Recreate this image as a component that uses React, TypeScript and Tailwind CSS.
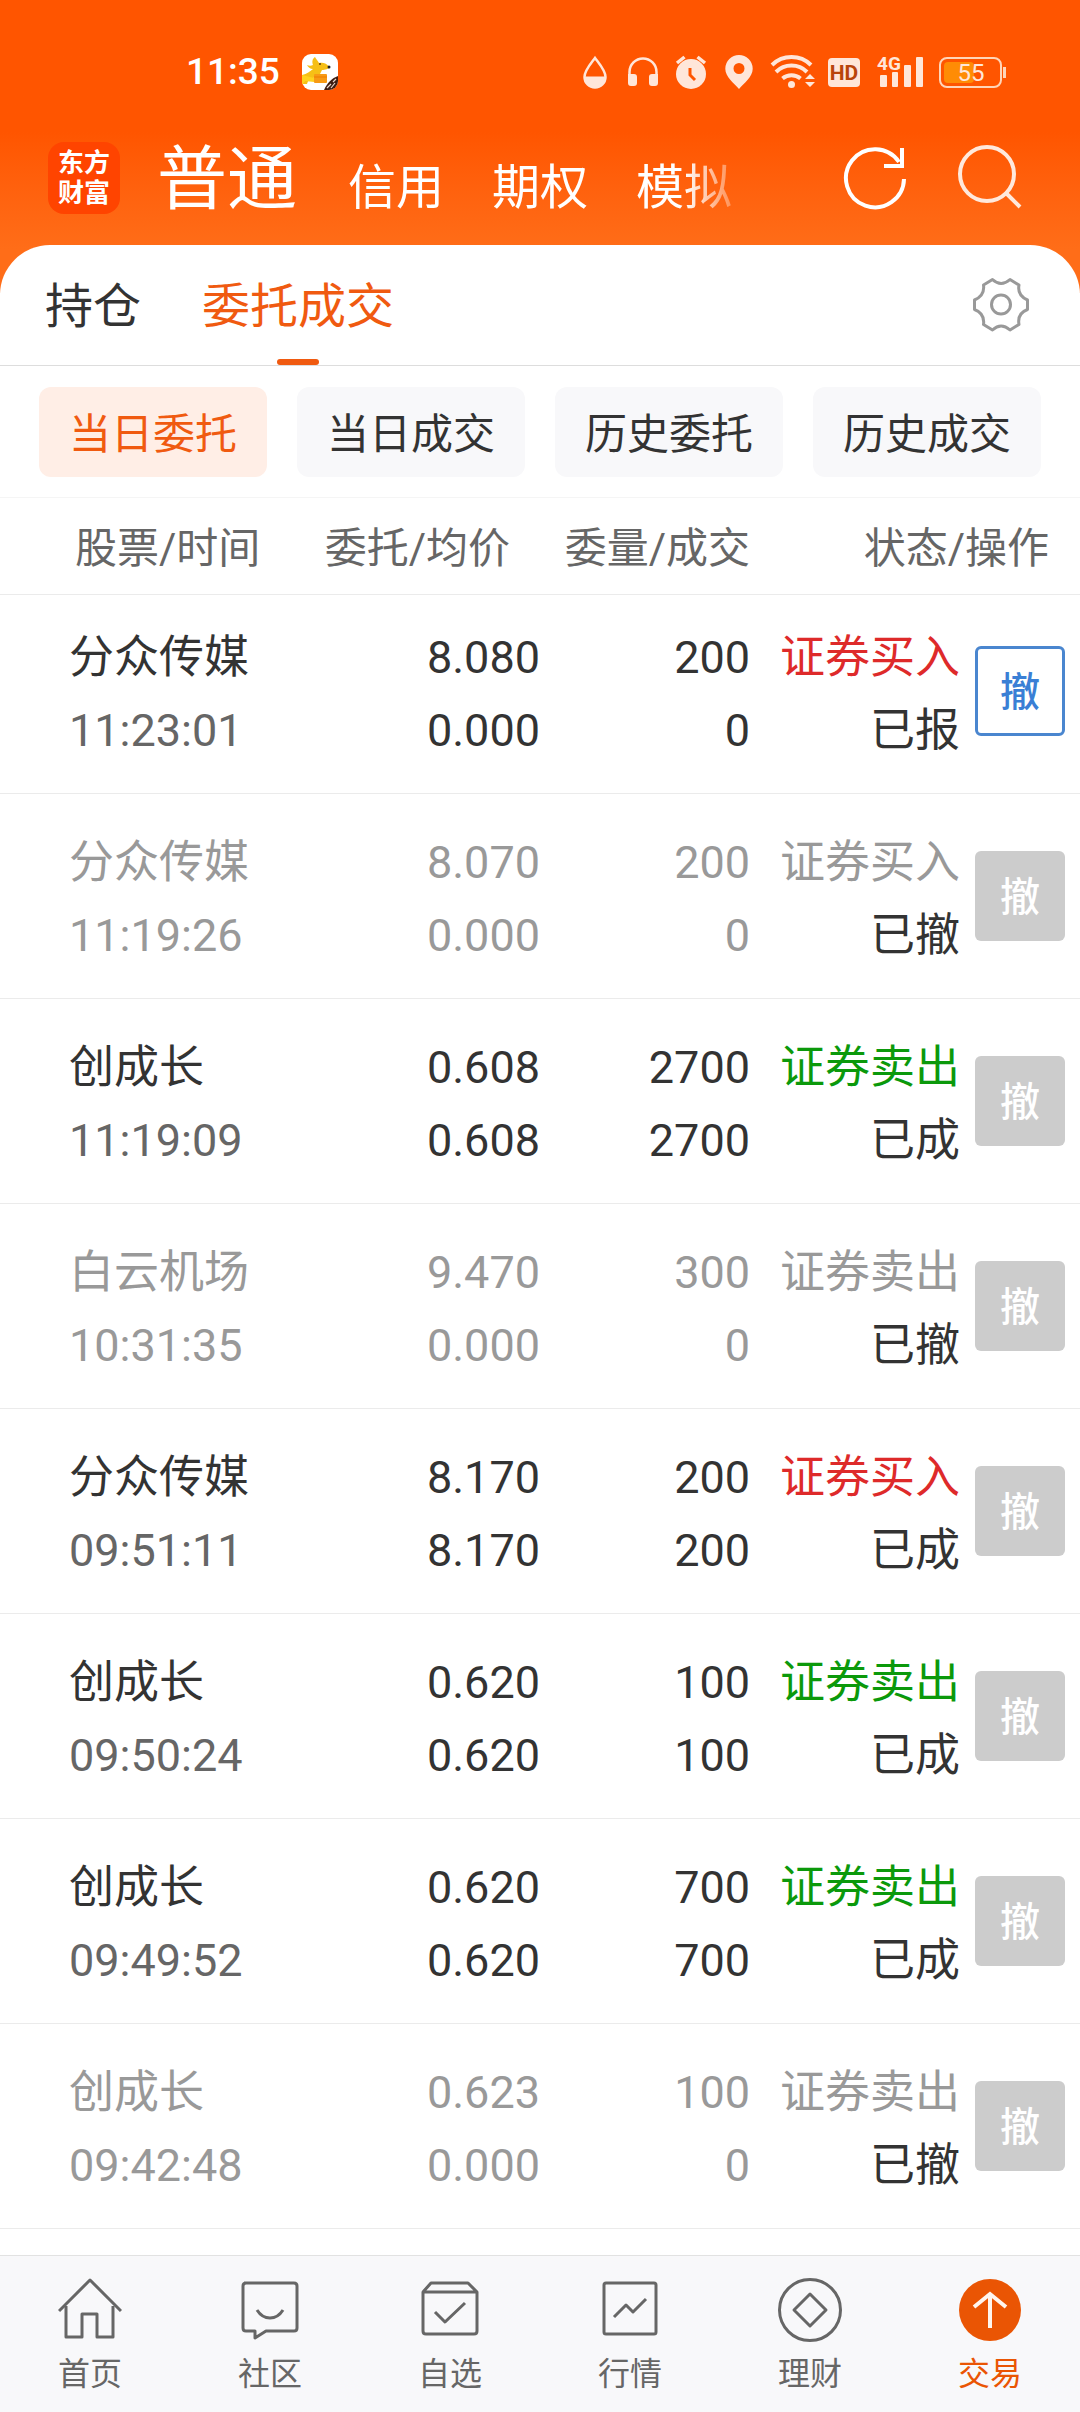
import { useState } from "react";
import type { ReactNode } from "react";

type Order = {
  name: string;
  time: string;
  price: string;
  avg: string;
  qty: string;
  done: string;
  side: "buy" | "sell";
  status: string;
};

const ORDERS: Order[] = [
  { name: "分众传媒", time: "11:23:01", price: "8.080", avg: "0.000", qty: "200", done: "0", side: "buy", status: "已报" },
  { name: "分众传媒", time: "11:19:26", price: "8.070", avg: "0.000", qty: "200", done: "0", side: "buy", status: "已撤" },
  { name: "创成长", time: "11:19:09", price: "0.608", avg: "0.608", qty: "2700", done: "2700", side: "sell", status: "已成" },
  { name: "白云机场", time: "10:31:35", price: "9.470", avg: "0.000", qty: "300", done: "0", side: "sell", status: "已撤" },
  { name: "分众传媒", time: "09:51:11", price: "8.170", avg: "8.170", qty: "200", done: "200", side: "buy", status: "已成" },
  { name: "创成长", time: "09:50:24", price: "0.620", avg: "0.620", qty: "100", done: "100", side: "sell", status: "已成" },
  { name: "创成长", time: "09:49:52", price: "0.620", avg: "0.620", qty: "700", done: "700", side: "sell", status: "已成" },
  { name: "创成长", time: "09:42:48", price: "0.623", avg: "0.000", qty: "100", done: "0", side: "sell", status: "已撤" },
];

const FILTERS = ["当日委托", "当日成交", "历史委托", "历史成交"];

function StatusBar() {
  return (
    <div className="flex h-9 items-center pl-[186px] pr-[73px] text-[#ffe6d9]">
      <span className="text-[37px] leading-10 font-medium text-white">11:35</span>
      <svg className="ml-[22px] size-9" viewBox="0 0 36 36">
        <clipPath id="app">
          <rect width="36" height="36" rx="9" />
        </clipPath>
        <g clipPath="url(#app)">
          <rect width="36" height="36" fill="#fff" />
          <path d="M0 21c5-1 8-4 11-6-3 0-5-2-6-4 2 1 4 1 6 0-1-3-1-6 2-8 1 2 3 4 4 6 4-1 7 0 11 4-1 2-5 3-8 3l-2 4h6v3h-9l-4 1c-3 1-5 2-6 6H0z" fill="#f6bf16" />
          <path d="M0 21l12 3v4L3 27l-3 4z" fill="#ffd21f" />
          <rect x="12" y="20" width="13" height="9" rx="1" fill="#f79a15" />
          <path d="M12 23h13" stroke="#ef7d00" strokeWidth="1" />
          <circle cx="18" cy="10" r="1" fill="#5b3a10" />
          <circle cx="27" cy="13" r="1.5" fill="#222" />
          <path d="M22 36c3-7 8-12 14-14v14z" fill="#3d1d12" />
          <path d="M25 34l4-4m0 4l4-5m-2-1l3-3" stroke="#e8d6cc" strokeWidth="1.2" />
        </g>
      </svg>
      <div className="ml-auto flex gap-3">
        {/* eye comfort */}
        <svg width="31" height="36" viewBox="0 0 31 36">
          <path d="M13 4C9 9.500 2.500 16.500 2.500 23a10.500 10.500 0 0 0 21 0C23.500 16.500 17 9.500 13 4z" fill="none" stroke="currentColor" strokeWidth="2.500" />
          <path d="M2.500 22.500h21a10.500 11.500 0 0 1-21 0z" fill="currentColor" />
        </svg>
        <svg width="36" height="36" viewBox="0 0 36 36">
          <path d="M4.500 26v-8a13.500 13.500 0 0 1 27 0v8" fill="none" stroke="currentColor" strokeWidth="2.500" />
          <path d="M3 20h6q3 0 3 3v6q0 3-3 3H6q-3 0-3-3zM33 20h-6q-3 0-3 3v6q0 3 3 3h3q3 0 3-3z" fill="currentColor" />
        </svg>
        <svg width="37" height="36" viewBox="0 0 37 36">
          <circle cx="18" cy="20" r="15" fill="currentColor" />
          <path d="M4 9l7.500-6M24.500 3L32 9" stroke="currentColor" strokeWidth="3.500" />
          <path d="M17 14v7l5 5" fill="none" stroke="#ff5500" strokeWidth="3" />
        </svg>
        <svg width="36" height="36" viewBox="0 0 36 36">
          <path fillRule="evenodd" d="M17 1a13.700 13.700 0 0 0-13.700 13.700C3.300 23 12 29 17 35c5-6 13.700-12 13.700-20.300A13.700 13.700 0 0 0 17 1zm0 8a5.500 5.500 0 1 1 0 11 5.500 5.500 0 0 1 0-11z" fill="currentColor" />
        </svg>
        <svg width="46" height="36" viewBox="0 0 46 36">
          <g fill="none" stroke="currentColor" strokeWidth="4">
            <path d="M2 11a28 28 0 0 1 39 0" />
            <path d="M6 18a22 22 0 0 1 31 0" />
            <path d="M12.500 24.500a14 14 0 0 1 18 0" />
          </g>
          <circle cx="21.500" cy="30.500" r="3.500" fill="currentColor" />
          <path d="M40 20l5 5H35zM35 28h10l-5 5z" fill="currentColor" />
        </svg>
        <svg width="34" height="36" viewBox="0 0 34 36">
          <rect y="4" width="32" height="29" rx="4" fill="currentColor" />
          <text x="16" y="26" textAnchor="middle" className="text-[21px] font-bold" fill="#b8440c">HD</text>
        </svg>
        <svg width="51" height="36" viewBox="0 0 51 36" className="overflow-visible">
          <text x="3" y="16" className="text-[19px] font-bold" fill="currentColor">4G</text>
          <g fill="currentColor">
            <rect x="6" y="21" width="7" height="12" rx="1" />
            <rect x="18" y="18" width="6" height="15" rx="1" />
            <rect x="30" y="11" width="7" height="22" rx="1" />
            <rect x="42" y="3" width="7" height="30" rx="1" />
          </g>
        </svg>
        <svg width="70" height="36" viewBox="0 0 70 36">
          <rect x="3" y="4" width="61" height="29" rx="7" fill="none" stroke="#ffd5b8" strokeWidth="2" />
          <rect x="7" y="8" width="30" height="21" rx="4" fill="#ff8c05" />
          <rect x="66" y="13" width="3" height="11" fill="#ffd5b8" />
          <text x="34" y="27" textAnchor="middle" className="text-[24px]" fill="currentColor">55</text>
        </svg>
      </div>
    </div>
  );
}

function NavItem({ label, active, children }: { label: string; active?: boolean; children: ReactNode }) {
  return (
    <a
      href="#"
      className={`flex flex-1 flex-col items-center gap-3 pt-[22px] pb-[18px] ${active ? "text-[#ea5504]" : "text-[#666]"}`}
    >
      <svg className="size-16" viewBox="0 0 64 64" fill="none" stroke="currentColor" strokeWidth="3" strokeLinejoin="round">
        {children}
      </svg>
      <span className="text-[32px] leading-10">{label}</span>
    </a>
  );
}

export default function App() {
  const [filter, setFilter] = useState(FILTERS[0]);

  return (
    <div className="flex min-h-screen flex-col bg-white font-['Roboto','Noto_Sans_CJK_SC',sans-serif] font-normal text-[#333]">
      {/* Header */}
      <header className="bg-linear-to-b from-[#ff5500] from-45% to-[#ff6d18] to-85% pt-[54px] pb-12">
        <StatusBar />
        <div className="flex h-[155px] items-center pt-5 pr-[58px] pl-12 text-white">
          <div className="grid size-[72px] shrink-0 place-content-center rounded-2xl bg-[#ff4400] text-center text-[26px] leading-[30px] font-bold">
            <span>东方</span>
            <span>财富</span>
          </div>
          <nav className="ml-[37px] flex items-baseline gap-12 pt-1 pr-5 text-5xl [mask-image:linear-gradient(to_right,#000_calc(100%-68px),transparent)]">
            <a href="#" className="pr-[3px] text-[70px] leading-[96px]">普通</a>
            <a href="#">信用</a>
            <a href="#">期权</a>
            <a href="#">模拟</a>
          </nav>
          <div className="ml-auto flex gap-12">
            <button aria-label="刷新">
              <svg className="size-[66px]" viewBox="0 0 66 66" fill="none" stroke="#fff" strokeWidth="4">
                <path d="M62 34A29 29 0 1 1 57 17" />
                <path d="M60 3v18H42" />
              </svg>
            </button>
            <button aria-label="搜索">
              <svg className="size-[66px]" viewBox="0 0 66 66" fill="none" stroke="#ffe9dc" strokeWidth="4">
                <circle cx="31" cy="29" r="27" />
                <path d="M50 48l14 14" />
              </svg>
            </button>
          </div>
        </div>
      </header>

      <main className="-mt-12 flex-1 rounded-t-[50px] bg-white">
        {/* Tabs */}
        <div className="flex h-[121px] items-center border-b border-[#ddd] pl-[45px] pr-[51px] text-5xl">
          <a href="#" className="pt-1">持仓</a>
          <a href="#" className="relative ml-[61px] flex h-full items-center pt-1 text-[#f05a10]">
            委托成交
            <span className="absolute bottom-0 left-1/2 h-1.5 w-[42px] -translate-x-1/2 rounded-full bg-[#f05a10]" />
          </a>
          <button aria-label="设置" className="ml-auto">
            <svg className="size-14" viewBox="-1 -1 56 55" fill="none" stroke="#999" strokeWidth="3" strokeLinejoin="round">
              <path d="M18.500 1Q27 9 36 1L45 6.500Q43 17 53.500 21.500V31Q43 35 45 46L36 51.500Q27 43.500 18.500 51.500L9.500 46Q11 35 .5 31V21.500Q11 17 9.500 6.500Z" />
              <circle cx="27" cy="26" r="9.500" />
            </svg>
          </button>
        </div>

        {/* Filters */}
        <div className="grid grid-cols-4 gap-[30px] border-b border-[#f5f5f5] px-[39px] pt-[21px] pb-5">
          {FILTERS.map((f) => (
            <button
              key={f}
              onClick={() => setFilter(f)}
              className={`h-[90px] rounded-xl pt-1 text-[42px] ${f === filter ? "bg-[#ffeee6] text-[#f05a10]" : "bg-[#f8f8fa]"}`}
            >
              {f}
            </button>
          ))}
        </div>

        {/* Orders */}
        <table className="w-full table-fixed border-separate border-spacing-0 text-right">
          <colgroup>
            <col />
            <col />
            <col className="w-[210px]" />
            <col className="w-[210px]" />
            <col className="w-[120px]" />
          </colgroup>
          <thead>
            <tr className="h-[97px] text-[42px] text-[#666] *:border-b *:border-[#ebebeb] *:p-0 *:pt-1 *:font-normal *:whitespace-nowrap">
              <th className="text-left"><span className="pl-[75px]">股票/时间</span></th>
              <th><span className="pr-[30px]">委托/均价</span></th>
              <th>委量/成交</th>
              <th colSpan={2}><span className="pr-[31px]">状态/操作</span></th>
            </tr>
          </thead>
          <tbody>
            {ORDERS.map((o) => {
              const cancelled = o.status === "已撤";
              const open = o.status === "已报";
              const sideColor = o.side === "buy" ? "text-[#de2a2a]" : "text-[#0b990b]";
              return (
                <tr
                  key={o.time}
                  className={`h-[205px] text-[45px] leading-[73px] first:h-[199px] *:border-b *:border-[#ebebeb] *:align-bottom ${cancelled ? "text-[#999]" : ""}`}
                >
                  <td className="pb-[26px] pl-[69px] text-left whitespace-nowrap">
                    {o.name}
                    <div className={cancelled ? "" : "text-[#666]"}>{o.time}</div>
                  </td>
                  <td className="pb-[26px]">
                    {o.price}
                    <div>{o.avg}</div>
                  </td>
                  <td className="pb-[26px]">
                    {o.qty}
                    <div>{o.done}</div>
                  </td>
                  <td className={`pb-[26px] ${cancelled ? "" : sideColor}`}>
                    {o.side === "buy" ? "证券买入" : "证券卖出"}
                    <div className="text-[#333]">{o.status}</div>
                  </td>
                  <td className="pr-[15px] pb-[57px]">
                    <button
                      disabled={!open}
                      className={`ml-auto block size-[90px] rounded-md pt-1 text-[40px] leading-none font-medium ${open ? "border-3 border-[#4a86cf] text-[#3a7fd5]" : "bg-[#ccc] text-white"}`}
                    >
                      撤
                    </button>
                  </td>
                </tr>
              );
            })}
          </tbody>
        </table>
      </main>

      {/* Bottom navigation */}
      <nav className="flex border-t border-[#e2e2e2] bg-[#f8f8fa]">
        <NavItem label="首页">
          <path d="M1 33L32 2l31 31" />
          <path d="M8 28v31h16V36h15v23h16V28" />
        </NavItem>
        <NavItem label="社区">
          <path d="M6 5h50q3 0 3 3v42q0 3-3 3H28l-11 7v-7H8q-3 0-3-3V8q0-3 3-3" />
          <path d="M19 32q5 8 13 8t13-8" />
        </NavItem>
        <NavItem label="自选">
          <path d="M5 14h54v39q0 3-3 3H8q-3 0-3-3zM5 14l8-9h37l9 9" />
          <path d="M17 34l10 10 20-19" />
        </NavItem>
        <NavItem label="行情">
          <rect x="6" y="5" width="52" height="51" rx="2" />
          <path d="M16 39l12-12 7 7 13-13" />
        </NavItem>
        <NavItem label="理财">
          <circle cx="32" cy="32" r="30.500" />
          <path d="M32 16l16 16-16 16-16-16z" />
        </NavItem>
        <NavItem label="交易" active>
          <circle cx="32" cy="32" r="31" fill="currentColor" stroke="none" />
          <path d="M32 50V17M16 29l16-13 16 13" stroke="#fff5ee" strokeWidth="4" strokeLinejoin="miter" />
        </NavItem>
      </nav>
    </div>
  );
}
